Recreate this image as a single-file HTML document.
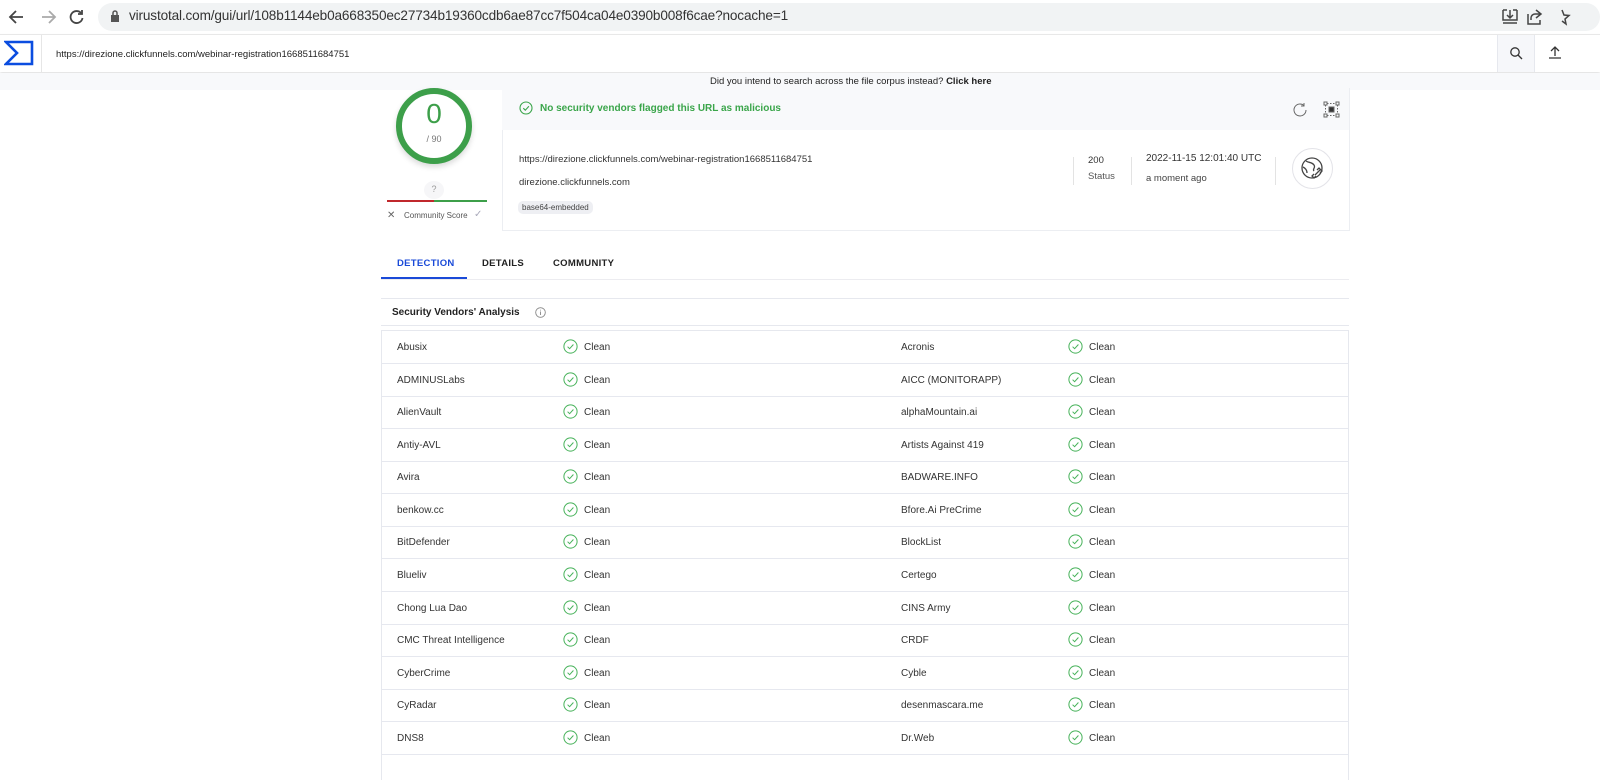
<!DOCTYPE html>
<html><head><meta charset="utf-8"><style>
*{margin:0;padding:0;box-sizing:border-box}
body{width:1600px;height:771px;overflow:hidden;background:#fff;font-family:"Liberation Sans",Arial,sans-serif;color:#222;position:relative}
.a{position:absolute}
.t{font-size:10px;color:#333;white-space:nowrap}
.row{position:absolute;left:382px;width:966px;height:33px;border-bottom:1px solid #e6e8ef;font-size:10px;color:#333}
.row span{position:absolute;top:11px}
.chk{position:absolute;top:8px;width:15px;height:15px}
</style></head><body>
<div class="a" style="left:0;top:0;width:1600px;height:34px;background:#fff"></div>
<div class="a" style="left:98px;top:3px;width:1502px;height:28px;border-radius:14px;background:#f1f3f4"></div>
<svg class="a" style="left:8px;top:8px" width="80" height="18" viewBox="0 0 80 18" fill="none" stroke="#444" stroke-width="1.8">
<path d="M15 9H2M8 3L2 9l6 6"/><path d="M34 9h13M41 3l6 6-6 6" stroke="#aaa"/><path d="M73 5a6 6 0 1 0 1.5 5" /><path d="M74 2v4h-4"/></svg>
<svg class="a" style="left:110px;top:10px" width="10" height="12" viewBox="0 0 10 12"><rect x="1" y="5" width="8" height="7" fill="#555"/><path d="M3 5V3a2 2 0 0 1 4 0v2" stroke="#555" fill="none" stroke-width="1.5"/></svg>
<div class="a" style="left:129px;top:8px;font-size:13.6px;color:#333;letter-spacing:-0.15px">virustotal.com/gui/url/108b1144eb0a668350ec27734b19360cdb6ae87cc7f504ca04e0390b008f6cae?nocache=1</div>
<svg class="a" style="left:1500px;top:7px" width="100" height="20" viewBox="0 0 100 20" fill="none" stroke="#444" stroke-width="1.5">
<path d="M3 3h4M13 3h4M3 3v10h14V3M10 3v8M7 8l3 3 3-3M3 16h14"/><path d="M28 7v10h12v-4M36 3l5 4-5 4M41 7h-6a4 4 0 0 0-4 4v2"/><path d="M62 3l2 5 5 .5-4 3.5 1 5-4-3"/></svg>
<div class="a" style="left:0;top:34px;width:1600px;height:38px;background:#fff;border-top:1px solid #e8e8e8;box-shadow:0 2px 3px rgba(0,0,0,.12)"></div>
<svg class="a" style="left:4px;top:40px" width="30" height="26" viewBox="0 0 30 26"><path d="M2 2h26v22H2L13 13z" fill="none" stroke="#0b4de0" stroke-width="2.6" stroke-linejoin="miter"/></svg>
<div class="a" style="left:41px;top:35px;width:1px;height:37px;background:#e6e6e6"></div>
<div class="a t" style="left:56px;top:49px;font-size:9.5px;color:#222">https://direzione.clickfunnels.com/webinar-registration1668511684751</div>
<div class="a" style="left:1497px;top:35px;width:38px;height:37px;background:#f6f7fa;border-left:1px solid #e6e8ee;border-right:1px solid #e6e8ee"></div>
<svg class="a" style="left:1509px;top:46px" width="14" height="14" viewBox="0 0 14 14" fill="none" stroke="#333" stroke-width="1.3"><circle cx="6" cy="6" r="4.2"/><path d="M9 9l4 4"/></svg>
<svg class="a" style="left:1548px;top:45px" width="14" height="14" viewBox="0 0 14 14" fill="none" stroke="#333" stroke-width="1.3"><path d="M7 11V2M3 6l4-4 4 4M1 13h12"/></svg>
<div class="a" style="left:0;top:73px;width:1600px;height:17px;background:#f8f9fb"></div>
<div class="a t" style="left:710px;top:76px;font-size:9.5px;color:#222">Did you intend to search across the file corpus instead? <b>Click here</b></div>
<div class="a" style="left:396px;top:88px;width:76px;height:76px;border-radius:50%;border:6px solid #3d9f4a;background:#fff;box-shadow:0 3px 6px rgba(0,0,0,.15)"></div>
<div class="a" style="left:396px;top:98px;width:76px;text-align:center;font-size:28px;color:#3d9f4a;font-weight:300">0</div>
<div class="a" style="left:396px;top:134px;width:76px;text-align:center;font-size:9px;color:#777">/ 90</div>
<div class="a" style="left:424px;top:181px;width:20px;height:18px;border-radius:50%;background:#f6f6f8;text-align:center;font-size:9px;color:#999;line-height:16px">?</div>
<div class="a" style="left:387px;top:200px;width:47px;height:2px;background:#c0282c"></div>
<div class="a" style="left:434px;top:200px;width:53px;height:2px;background:#3d9f4a"></div>
<div class="a" style="left:387px;top:210px;font-size:10px;color:#666">✕</div>
<div class="a t" style="left:404px;top:211px;font-size:8px;color:#555">Community Score</div>
<div class="a" style="left:474px;top:209px;font-size:10px;color:#aab">✓</div>
<div class="a" style="left:502px;top:88px;width:848px;height:143px;background:#fff;border:1px solid #eceef2;border-top:none"></div>
<div class="a" style="left:502px;top:88px;width:847px;height:42px;background:#f8f9fb"></div>
<svg class="a" style="left:519px;top:101px" width="14" height="14" viewBox="0 0 14 14" fill="none" stroke="#3aa54a" stroke-width="1.1"><circle cx="7" cy="7" r="6"/><path d="M4.3 7.2l2 2 3.6-4"/></svg>
<div class="a t" style="left:540px;top:103px;font-size:10px;color:#3aa54a;font-weight:bold">No security vendors flagged this URL as malicious</div>
<svg class="a" style="left:1292px;top:101px" width="48" height="18" viewBox="0 0 48 18" fill="none" stroke="#666" stroke-width="1"><path d="M14 9a6 6 0 1 1-2-4.5M12 2v3h-3"/><rect x="32" y="1" width="3" height="3"/><rect x="44" y="1" width="3" height="3"/><rect x="32" y="13" width="3" height="3"/><rect x="44" y="13" width="3" height="3"/><rect x="37" y="6" width="5" height="5" fill="#333"/><path d="M35 2.5h9M35 14.5h9M33.5 4v9M45.5 4v9" stroke-dasharray="1.5 1.5"/></svg>
<div class="a t" style="left:519px;top:154px;font-size:9.5px">https://direzione.clickfunnels.com/webinar-registration1668511684751</div>
<div class="a t" style="left:519px;top:177px;font-size:9.5px">direzione.clickfunnels.com</div>
<div class="a t" style="left:518px;top:201px;padding:2px 4px;background:#eeeff3;border-radius:5px;font-size:8px;color:#444">base64-embedded</div>
<div class="a" style="left:1073px;top:157px;width:1px;height:28px;background:#e3e3e3"></div>
<div class="a t" style="left:1088px;top:155px;font-size:9.5px">200</div>
<div class="a t" style="left:1088px;top:171px;font-size:9.5px;color:#555">Status</div>
<div class="a" style="left:1131px;top:157px;width:1px;height:28px;background:#e3e3e3"></div>
<div class="a t" style="left:1146px;top:153px;font-size:10px">2022-11-15 12:01:40 UTC</div>
<div class="a t" style="left:1146px;top:173px;font-size:9.5px;color:#444">a moment ago</div>
<div class="a" style="left:1275px;top:157px;width:1px;height:28px;background:#e3e3e3"></div>
<div class="a" style="left:1292px;top:148px;width:41px;height:41px;border-radius:50%;border:1px solid #e3e3e8"></div>
<svg class="a" style="left:1299px;top:155px" width="27" height="27" viewBox="0 0 27 27" fill="none" stroke="#444" stroke-width="1.3"><circle cx="13" cy="13" r="10"/><path d="M7 6c3 2 6 1 8 4s-2 4 0 6M4 12c2 1 4 3 4 6"/><path d="M16 20l5-5M18 15l2-2 3 3-2 2M15 19l-2 2 2 2 2-2"/></svg>
<div class="a" style="left:397px;top:258px;font-size:9.5px;font-weight:bold;color:#1a4ad8;letter-spacing:.3px">DETECTION</div>
<div class="a" style="left:482px;top:258px;font-size:9.5px;font-weight:bold;color:#222;letter-spacing:.3px">DETAILS</div>
<div class="a" style="left:553px;top:258px;font-size:9.5px;font-weight:bold;color:#222;letter-spacing:.3px">COMMUNITY</div>
<div class="a" style="left:381px;top:279px;width:968px;height:1px;background:#ececf0"></div>
<div class="a" style="left:381px;top:277px;width:86px;height:2px;background:#1a4ad8"></div>
<div class="a" style="left:381px;top:298px;width:968px;height:1px;background:#e6e8ee"></div>
<div class="a t" style="left:392px;top:307px;font-size:10px;font-weight:bold;color:#222">Security Vendors' Analysis</div>
<svg class="a" style="left:535px;top:307px" width="11" height="11" viewBox="0 0 11 11" fill="none" stroke="#888" stroke-width=".9"><circle cx="5.5" cy="5.5" r="4.8"/><path d="M5.5 4.5v3.5M5.5 2.7v.8"/></svg>
<div class="a" style="left:381px;top:325px;width:968px;height:1px;background:#e6e8ee"></div>
<div class="a" style="left:381px;top:330px;width:968px;height:450px;border:1px solid #e6e8ee;border-bottom:none"></div>
<svg width="0" height="0" style="position:absolute"><defs><symbol id="ck" viewBox="0 0 15 15"><circle cx="7.5" cy="7.5" r="6.6" fill="none" stroke="#47b25a" stroke-width="1"/><path d="M4.6 7.7l2 2 3.8-4.2" fill="none" stroke="#47b25a" stroke-width="1"/></symbol></defs></svg>
<div class="row" style="top:331px"><span style="left:15px">Abusix</span><svg class="chk" style="left:181px"><use href="#ck"/></svg><span style="left:202px">Clean</span><span style="left:519px">Acronis</span><svg class="chk" style="left:686px"><use href="#ck"/></svg><span style="left:707px">Clean</span></div>
<div class="row" style="top:364px"><span style="left:15px">ADMINUSLabs</span><svg class="chk" style="left:181px"><use href="#ck"/></svg><span style="left:202px">Clean</span><span style="left:519px">AICC (MONITORAPP)</span><svg class="chk" style="left:686px"><use href="#ck"/></svg><span style="left:707px">Clean</span></div>
<div class="row" style="top:396px"><span style="left:15px">AlienVault</span><svg class="chk" style="left:181px"><use href="#ck"/></svg><span style="left:202px">Clean</span><span style="left:519px">alphaMountain.ai</span><svg class="chk" style="left:686px"><use href="#ck"/></svg><span style="left:707px">Clean</span></div>
<div class="row" style="top:429px"><span style="left:15px">Antiy-AVL</span><svg class="chk" style="left:181px"><use href="#ck"/></svg><span style="left:202px">Clean</span><span style="left:519px">Artists Against 419</span><svg class="chk" style="left:686px"><use href="#ck"/></svg><span style="left:707px">Clean</span></div>
<div class="row" style="top:461px"><span style="left:15px">Avira</span><svg class="chk" style="left:181px"><use href="#ck"/></svg><span style="left:202px">Clean</span><span style="left:519px">BADWARE.INFO</span><svg class="chk" style="left:686px"><use href="#ck"/></svg><span style="left:707px">Clean</span></div>
<div class="row" style="top:494px"><span style="left:15px">benkow.cc</span><svg class="chk" style="left:181px"><use href="#ck"/></svg><span style="left:202px">Clean</span><span style="left:519px">Bfore.Ai PreCrime</span><svg class="chk" style="left:686px"><use href="#ck"/></svg><span style="left:707px">Clean</span></div>
<div class="row" style="top:526px"><span style="left:15px">BitDefender</span><svg class="chk" style="left:181px"><use href="#ck"/></svg><span style="left:202px">Clean</span><span style="left:519px">BlockList</span><svg class="chk" style="left:686px"><use href="#ck"/></svg><span style="left:707px">Clean</span></div>
<div class="row" style="top:559px"><span style="left:15px">Blueliv</span><svg class="chk" style="left:181px"><use href="#ck"/></svg><span style="left:202px">Clean</span><span style="left:519px">Certego</span><svg class="chk" style="left:686px"><use href="#ck"/></svg><span style="left:707px">Clean</span></div>
<div class="row" style="top:592px"><span style="left:15px">Chong Lua Dao</span><svg class="chk" style="left:181px"><use href="#ck"/></svg><span style="left:202px">Clean</span><span style="left:519px">CINS Army</span><svg class="chk" style="left:686px"><use href="#ck"/></svg><span style="left:707px">Clean</span></div>
<div class="row" style="top:624px"><span style="left:15px">CMC Threat Intelligence</span><svg class="chk" style="left:181px"><use href="#ck"/></svg><span style="left:202px">Clean</span><span style="left:519px">CRDF</span><svg class="chk" style="left:686px"><use href="#ck"/></svg><span style="left:707px">Clean</span></div>
<div class="row" style="top:657px"><span style="left:15px">CyberCrime</span><svg class="chk" style="left:181px"><use href="#ck"/></svg><span style="left:202px">Clean</span><span style="left:519px">Cyble</span><svg class="chk" style="left:686px"><use href="#ck"/></svg><span style="left:707px">Clean</span></div>
<div class="row" style="top:689px"><span style="left:15px">CyRadar</span><svg class="chk" style="left:181px"><use href="#ck"/></svg><span style="left:202px">Clean</span><span style="left:519px">desenmascara.me</span><svg class="chk" style="left:686px"><use href="#ck"/></svg><span style="left:707px">Clean</span></div>
<div class="row" style="top:722px"><span style="left:15px">DNS8</span><svg class="chk" style="left:181px"><use href="#ck"/></svg><span style="left:202px">Clean</span><span style="left:519px">Dr.Web</span><svg class="chk" style="left:686px"><use href="#ck"/></svg><span style="left:707px">Clean</span></div>
</body></html>
